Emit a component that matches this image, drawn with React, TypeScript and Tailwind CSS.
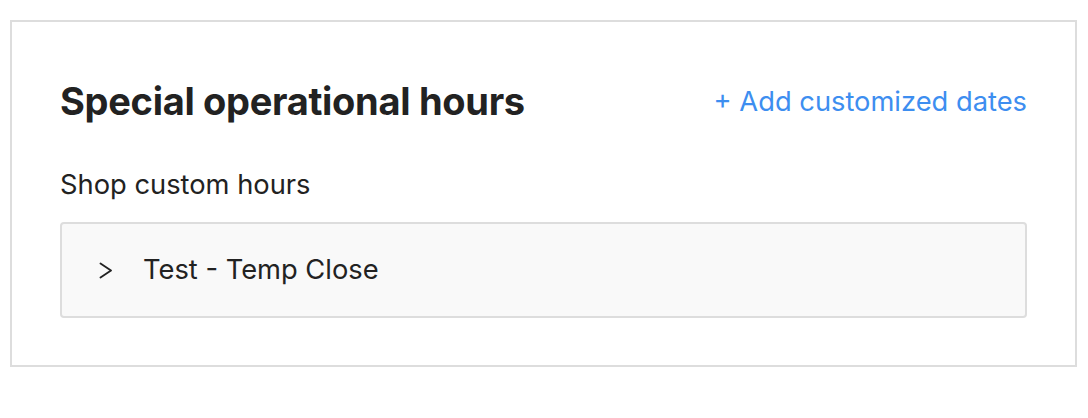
export default function App() {
  return (
    <div className="min-h-screen bg-white pt-[20px] pl-[10px] pr-[11px] font-['Inter',sans-serif] text-[#222222]">
      <div className="border-2 border-[#dddddd] px-[48px] pt-[57px] pb-[47px]">
        <div className="flex items-center justify-between">
          <h2 className="text-[38px] leading-[44px] font-bold tracking-[-0.3px]">Special operational hours</h2>
          <button className="mt-[2px] text-[27.3px] leading-[36px] text-[#3d8ef0]">+ Add customized dates</button>
        </div>
        <p className="mt-[44px] text-[27.3px] leading-[36px]">Shop custom hours</p>
        <div className="mt-[19px] flex h-[96px] items-center rounded-[4px] border-2 border-[#dddddd] bg-[#f9f9f9] pl-[37px]">
          <svg width="14" height="17" viewBox="0 0 14 17" fill="none" className="mt-[1px]">
            <path d="M1.5 1.5 L12 8.5 L1.5 15.5" stroke="#222222" strokeWidth="1.9" strokeLinecap="round" strokeLinejoin="round" />
          </svg>
          <span className="ml-[30px] text-[27.3px] leading-[36px]">Test - Temp Close</span>
        </div>
      </div>
    </div>
  );
}
